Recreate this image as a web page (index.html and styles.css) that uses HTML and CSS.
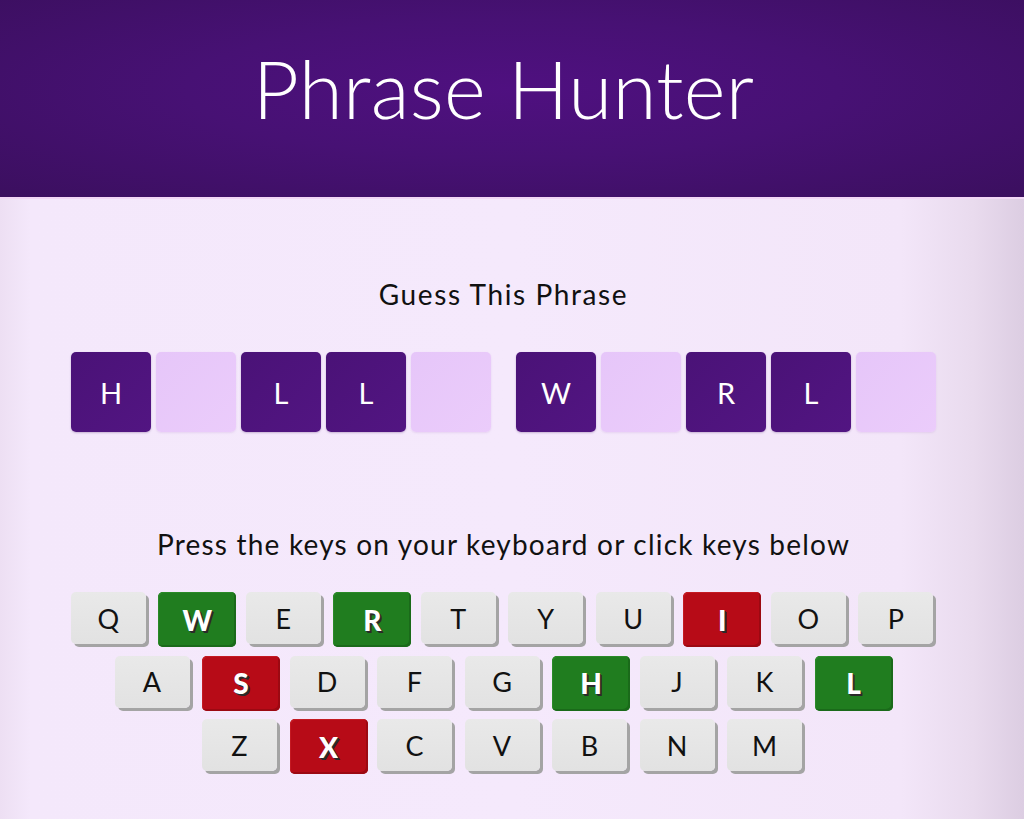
FILE: index.html
```html
<!DOCTYPE html>
<html lang="en">
<head>
<meta charset="utf-8">
<title>Phrase Hunter</title>
<link rel="stylesheet" href="styles.css">
</head>
<body>
<header class="banner">
  <h1 class="title">Phrase Hunter</h1>
</header>
<main class="game">
  <h2 class="label">Guess This Phrase</h2>
  <ul class="phrase">
    <li class="tile show">H</li>
    <li class="tile hide"></li>
    <li class="tile show">L</li>
    <li class="tile show">L</li>
    <li class="tile hide"></li>
    <li class="space"></li>
    <li class="tile show">W</li>
    <li class="tile hide"></li>
    <li class="tile show">R</li>
    <li class="tile show">L</li>
    <li class="tile hide"></li>
  </ul>
  <p class="hint">Press the keys on your keyboard or click keys below</p>
  <div class="keyboard">
    <div class="row">
      <button class="key">Q</button>
      <button class="key chosen">W</button>
      <button class="key">E</button>
      <button class="key chosen">R</button>
      <button class="key">T</button>
      <button class="key">Y</button>
      <button class="key">U</button>
      <button class="key wrong">I</button>
      <button class="key">O</button>
      <button class="key">P</button>
    </div>
    <div class="row">
      <button class="key">A</button>
      <button class="key wrong">S</button>
      <button class="key">D</button>
      <button class="key">F</button>
      <button class="key">G</button>
      <button class="key chosen">H</button>
      <button class="key">J</button>
      <button class="key">K</button>
      <button class="key chosen">L</button>
    </div>
    <div class="row">
      <button class="key">Z</button>
      <button class="key wrong">X</button>
      <button class="key">C</button>
      <button class="key">V</button>
      <button class="key">B</button>
      <button class="key">N</button>
      <button class="key">M</button>
    </div>
  </div>
</main>
</body>
</html>
```

FILE: styles.css
```css
* { box-sizing: border-box; }

html, body {
  margin: 0;
  padding: 0;
  height: 100%;
}

body {
  font-family: "Lato", "Noto Sans", sans-serif;
  color: #111;
  background: linear-gradient(to right, #eddff3 0%, #f4e8fb 3%, #f5e9fc 50%, #f3e6f9 88%, #e9dbee 95%, #dccde2 100%);
  overflow: hidden;
}

.banner {
  height: 199px;
  padding-right: 17px;
  background: radial-gradient(ellipse at 50% 45%, #4f1080 0%, #471174 45%, #3b0f5f 100%);
  border-bottom: 2px solid #f2d6f6;
  display: flex;
  align-items: center;
  justify-content: center;
  padding-bottom: 22px;
}

.title {
  margin: 0;
  font-size: 80px;
  line-height: 1;
  font-weight: 300;
  color: #fff;
  letter-spacing: 0.3px;
}

.game {
  padding-right: 17px;
  display: flex;
  flex-direction: column;
  align-items: center;
}

.label {
  margin: 78px 0 0;
  font-size: 28px;
  line-height: 34px;
  font-weight: 400;
  letter-spacing: 1.6px;
}

.phrase {
  list-style: none;
  margin: 41px 0 0;
  padding: 0;
  display: flex;
  gap: 5px;
}

.tile {
  width: 80px;
  height: 80px;
  border-radius: 5px;
  display: flex;
  align-items: center;
  justify-content: center;
  font-size: 29px;
  color: #fff;
  letter-spacing: 0;
}

.tile.show {
  background: linear-gradient(135deg, #4a1277 0%, #521582 100%);
  box-shadow: 0 1px 2px rgba(60, 10, 90, 0.25);
}

.tile.hide {
  background: linear-gradient(135deg, #e6c6f9 0%, #ebccfb 100%);
  box-shadow: 0 1px 2px rgba(200, 160, 220, 0.3);
}

.space {
  width: 15px;
}

.hint {
  margin: 95px 0 0;
  font-size: 28px;
  line-height: 34px;
  letter-spacing: 1.2px;
}

.keyboard {
  margin-top: 31px;
  display: flex;
  flex-direction: column;
  align-items: center;
  gap: 11.5px;
}

.row {
  display: flex;
  gap: 12.5px;
  padding-right: 3px;
}

.key {
  width: 75px;
  height: 52px;
  border: none;
  border-radius: 5px;
  padding: 0;
  font-family: inherit;
  font-size: 27px;
  color: #111;
  background: linear-gradient(to bottom, #e9e9e9, #e2e2e2);
  box-shadow: 3px 3px 0 #a4a4a4;
}

.key.chosen,
.key.wrong {
  width: 78px;
  height: 55px;
  margin-right: -3px;
  margin-bottom: -3px;
  color: #fff;
  font-weight: 900;
  font-size: 28px;
  text-shadow: 1px 1px 0 #2a2a2a, 2px 2px 0 #2a2a2a;
}

.key.chosen {
  background: #207d1f;
  box-shadow: inset -2px -2px 0 #1a6a1a, inset 1px 1px 0 #2a8a28;
}

.key.wrong {
  background: #b70b17;
  box-shadow: inset -2px -2px 0 #9c0912, inset 1px 1px 0 #c41a22;
}
```
